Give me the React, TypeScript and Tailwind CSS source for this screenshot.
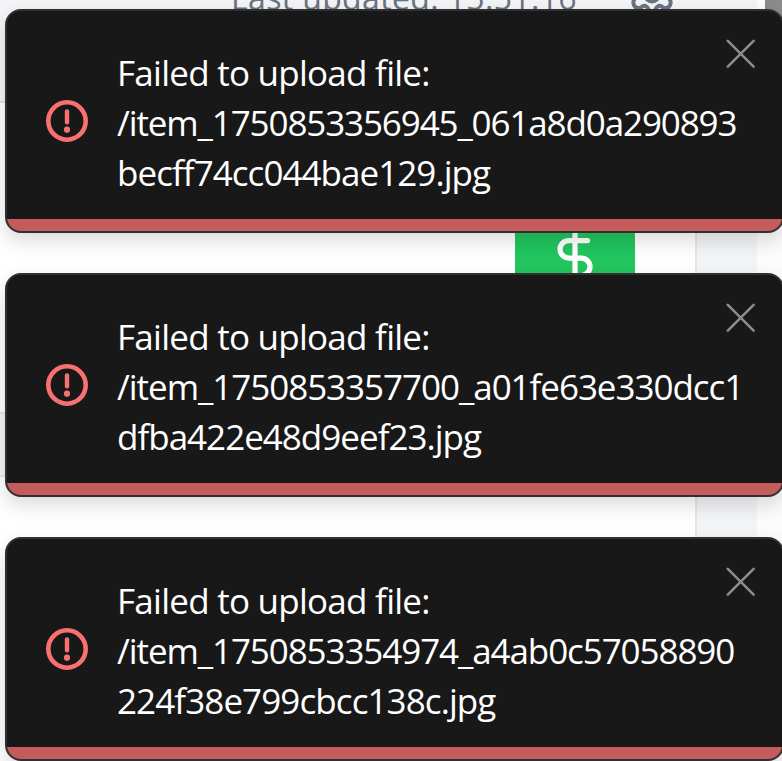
import React from "react";

type ToastData = { lines: { text: string; spacing: string }[] };

const toasts: ToastData[] = [
  {
    lines: [
      { text: "Failed to upload file:", spacing: "tracking-[-0.74px]" },
      { text: "/item_1750853356945_061a8d0a290893", spacing: "tracking-[-1.12px]" },
      { text: "becff74cc044bae129.jpg", spacing: "tracking-[-0.95px]" },
    ],
  },
  {
    lines: [
      { text: "Failed to upload file:", spacing: "tracking-[-0.74px]" },
      { text: "/item_1750853357700_a01fe63e330dcc1", spacing: "tracking-[-1.04px]" },
      { text: "dfba422e48d9eef23.jpg", spacing: "tracking-[-0.99px]" },
    ],
  },
  {
    lines: [
      { text: "Failed to upload file:", spacing: "tracking-[-0.74px]" },
      { text: "/item_1750853354974_a4ab0c57058890", spacing: "tracking-[-1.09px]" },
      { text: "224f38e799cbcc138c.jpg", spacing: "tracking-[-0.91px]" },
    ],
  },
];

function AlertIcon() {
  return (
    <svg className="h-[42px] w-[42px] shrink-0" viewBox="0 0 42 42" fill="none">
      <circle cx="21" cy="21" r="18.7" stroke="#f87171" strokeWidth="4.6" />
      <path d="M21 11.5v10.7" stroke="#f87171" strokeWidth="4.4" strokeLinecap="round" />
      <circle cx="21" cy="29.7" r="3.1" fill="#f87171" />
    </svg>
  );
}

function CloseIcon() {
  return (
    <svg className="h-[30px] w-[30px]" viewBox="0 0 30 30" fill="none" stroke="#8b8b8b" strokeWidth="2.6" strokeLinecap="round">
      <path d="M1.8 1.8 27.6 27.6M27.6 1.8 1.8 27.6" />
    </svg>
  );
}

function Toast({ lines }: ToastData) {
  return (
    <div className="relative flex h-[224px] w-[779px] shrink-0 items-center overflow-hidden rounded-2xl border-2 border-[#303032] bg-[#181818] pl-[39px] shadow-[0_8px_20px_rgba(0,0,0,0.15)]">
      <AlertIcon />
      <div className="ml-[29px] flex flex-col whitespace-nowrap pt-[4px] text-[35px] leading-[50px] text-white">
        {lines.map((l) => (
          <div key={l.text}>
            <span className={l.spacing}>{l.text}</span>
          </div>
        ))}
      </div>
      <button className="absolute right-[26px] top-[28px]" aria-label="Close">
        <CloseIcon />
      </button>
      <div className="absolute inset-x-0 bottom-0 h-3 bg-[#c45c5c]" />
    </div>
  );
}

export default function App() {
  return (
    <div className="relative h-[761px] w-[782px] overflow-hidden bg-[#fcfcfc] font-['Open_Sans','Noto_Sans',sans-serif]">
      <div className="flex h-full">
        <div className="flex w-[757px] flex-col bg-[#f3f4f6]">
          <header className="flex h-[103px] shrink-0 items-start border-b-2 border-[#e2e4e9] pl-[231px]">
            <span className="-mt-[25px] w-[400px] whitespace-nowrap text-[32px] leading-[46px] tracking-[0.35px] text-[#6b7280]">
              Last updated: 15:51:16
            </span>
            <svg className="h-[11px] w-[42px]" viewBox="0 0 42 11" fill="none" stroke="#6b7280" strokeWidth="4">
              <path d="M3.5-1C1 3 3 8 7.500 8C11 8 11 5 14.500 6C18 7 17 12 21 12C25 12 24 7 27.500 6C31 5 31 8 34.500 8C39 8 41 3 38.500-1" />
              <circle cx="21" cy="-5.500" r="7" />
            </svg>
          </header>
          <section className="flex h-[311px] w-[697px] shrink-0 border-b-2 border-r-2 border-[#e5e6ea] bg-white pl-[515px] pt-[95px]">
            <div className="flex h-[120px] w-[120px] items-center justify-center bg-[#22c55e]">
              <svg className="h-[60px] w-[60px]" viewBox="0 0 24 24" fill="none" stroke="white" strokeWidth="2.1" strokeLinecap="round">
                <path d="M12 1v22M17 5H9.5a3.5 3.5 0 0 0 0 7h5a3.5 3.5 0 0 1 0 7H6" />
              </svg>
            </div>
          </section>
          <div className="h-[61px] shrink-0" />
          <section className="h-[300px] w-[697px] shrink-0 rounded-tr-[24px] border-r-2 border-t-2 border-[#e5e6ea] bg-white" />
        </div>
        <div className="w-2" />
        <div className="h-12 w-[17px] bg-[#8b8b8b]" />
      </div>
      <div className="absolute left-[5px] top-[9px] flex flex-col gap-10">
        {toasts.map((t) => (
          <Toast key={t.lines[1].text} {...t} />
        ))}
      </div>
    </div>
  );
}
